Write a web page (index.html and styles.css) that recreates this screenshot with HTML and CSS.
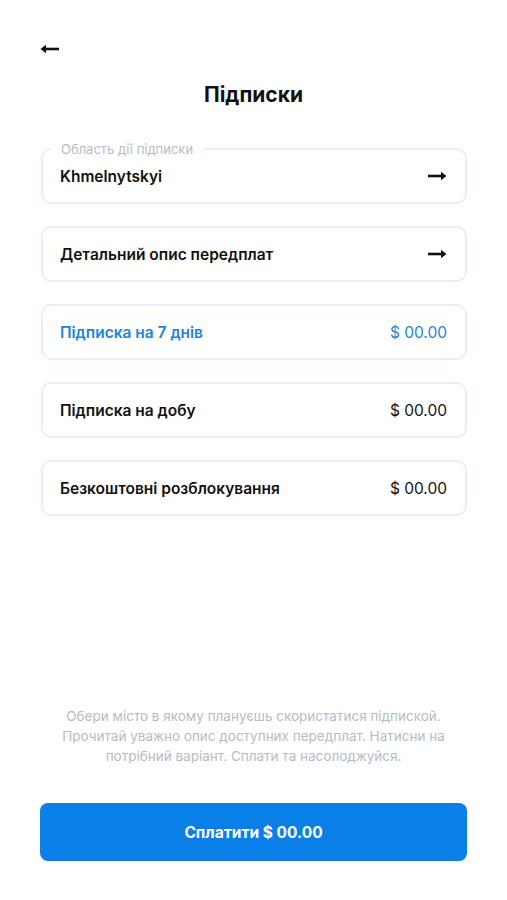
FILE: index.html
```html
<!DOCTYPE html>
<html lang="uk">
<head>
<meta charset="UTF-8" />
<meta name="viewport" content="width=device-width, initial-scale=1" />
<title>Підписки</title>
<link rel="stylesheet" href="styles.css">
</head>
<body>
  <div class="screen">
    <header class="top">
      <button class="back" aria-label="Назад">
        <svg width="20" height="12" viewBox="0 0 20 12"><path d="M19 6H4" stroke="#111" stroke-width="2.6"/><path d="M0.5 6L6 1.8V10.2Z" fill="#111"/></svg>
      </button>
      <h1>Підписки</h1>
    </header>

    <div class="list">
      <div class="card">
        <span class="legend">Область дії підписки</span>
        <span class="name">Khmelnytskyi</span>
        <svg class="arrow" width="19" height="12" viewBox="0 0 19 12"><path d="M0 6H15" stroke="#111" stroke-width="2.6"/><path d="M18.5 6L13 1.8V10.2Z" fill="#111"/></svg>
      </div>
      <div class="card">
        <span class="name">Детальний опис передплат</span>
        <svg class="arrow" width="19" height="12" viewBox="0 0 19 12"><path d="M0 6H15" stroke="#111" stroke-width="2.6"/><path d="M18.5 6L13 1.8V10.2Z" fill="#111"/></svg>
      </div>
      <div class="card active">
        <span class="name">Підписка на 7 днів</span>
        <span class="price">$ 00.00</span>
      </div>
      <div class="card">
        <span class="name">Підписка на добу</span>
        <span class="price">$ 00.00</span>
      </div>
      <div class="card">
        <span class="name">Безкоштовні розблокування</span>
        <span class="price">$ 00.00</span>
      </div>
    </div>

    <p class="hint">Обери місто в якому плануєшь скористатися підпиской. Прочитай уважно опис доступних передплат. Натисни на потрібний варіант. Сплати та насолоджуйся.</p>

    <button class="pay">Сплатити $ 00.00</button>
  </div>
</body>
</html>
```

FILE: styles.css
```css
* {
  box-sizing: border-box;
}
body {
  margin: 0;
  background: #fff;
  font-family: 'Inter', 'Noto Sans', sans-serif;
  color: #111;
}
.screen {
  width: 507px;
  height: 900px;
  padding: 40px 40px 0 40px;
  display: flex;
  flex-direction: column;
}
.top {
  display: flex;
  flex-direction: column;
}
.back {
  background: none;
  border: none;
  padding: 0;
  width: 20px;
  height: 18px;
  display: flex;
  align-items: center;
  cursor: pointer;
}
h1 {
  margin: 23px 0 0;
  text-align: center;
  font-size: 21px;
  font-weight: 700;
  line-height: 28px;
}
.list {
  margin: 39px 0 0 1px;
  width: 426px;
  display: flex;
  flex-direction: column;
  gap: 22px;
}
.card {
  position: relative;
  height: 56px;
  border: 2px solid #e6f0fc;
  border-radius: 10px;
  padding: 0 18px 0 17px;
  display: flex;
  align-items: center;
  justify-content: space-between;
}
.legend {
  position: absolute;
  left: 8px;
  top: -10px;
  padding: 0 10px;
  background: #fff;
  font-size: 13px;
  line-height: 18px;
  color: #b3bcc8;
}
.name {
  font-size: 15.5px;
  font-weight: 600;
}
.price {
  font-size: 15.5px;
  font-weight: 400;
}
.card.active .name,
.card.active .price {
  color: #1a84de;
}
.hint {
  margin: 190px 4px 0;
  text-align: center;
  font-size: 13.5px;
  line-height: 20px;
  color: #b4bcc6;
}
.pay {
  margin-top: 37px;
  height: 58px;
  width: 427px;
  border: none;
  border-radius: 8px;
  background: #0a7fe8;
  color: #fff;
  font-family: inherit;
  font-size: 15.5px;
  font-weight: 700;
  cursor: pointer;
}
```
